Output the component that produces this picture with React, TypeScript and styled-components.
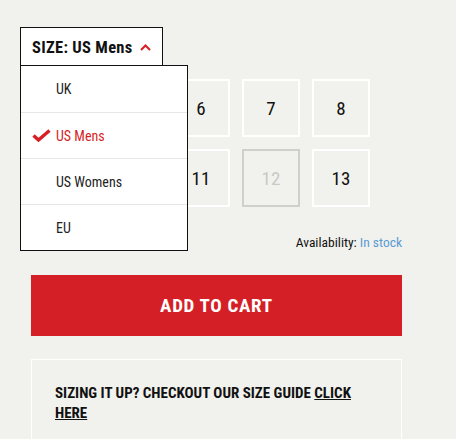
import React from "react";
import styled, { createGlobalStyle } from "styled-components";

const FONT = `"Roboto Condensed", "Liberation Sans", sans-serif`;

const GlobalStyle = createGlobalStyle`
  html, body {
    margin: 0;
    padding: 0;
    background: #f1f1ed;
  }
  body {
    font-family: ${FONT};
    color: #111;
  }
`;

const Page = styled.div`
  position: relative;
  width: 456px;
  height: 439px;
  overflow: hidden;
  padding: 27px 0 0 20px;
  box-sizing: border-box;
`;

const Selector = styled.div`
  position: relative;
  width: 142px;
`;

const Trigger = styled.button`
  display: flex;
  align-items: center;
  gap: 7px;
  width: 143px;
  height: 39px;
  padding: 0 0 0 11px;
  margin: 0;
  box-sizing: border-box;
  border: 1px solid #111;
  border-bottom: none;
  background: #fff;
  font-family: ${FONT};
  font-weight: 700;
  font-size: 16.5px;
  letter-spacing: 0.3px;
  white-space: nowrap;
  color: #111;
  cursor: pointer;
`;

const Menu = styled.ul`
  position: absolute;
  top: 38px;
  left: 0;
  z-index: 2;
  width: 168px;
  margin: 0;
  padding: 0;
  list-style: none;
  box-sizing: border-box;
  border: 1px solid #111;
  background: #fff;
`;

const MenuItem = styled.li<{ $active?: boolean }>`
  display: flex;
  align-items: center;
  height: 46px;
  padding-left: 11px;
  gap: 5px;
  box-sizing: border-box;
  font-size: 14px;
  color: ${(p) => (p.$active ? "#d71f27" : "#222")};
  & + & {
    border-top: 1px solid #e6e6e6;
  }
`;

const CheckSlot = styled.span`
  display: inline-flex;
  width: 19px;
  height: 14px;
  align-items: center;
`;

const Grid = styled.div`
  display: grid;
  grid-template-columns: repeat(5, 58px);
  gap: 12px;
  margin: 13px 0 0 12px;
`;

const SizeBox = styled.button<{ $disabled?: boolean }>`
  width: 58px;
  height: 58px;
  box-sizing: border-box;
  border: 2px solid ${(p) => (p.$disabled ? "#cfcfcc" : "#fff")};
  background: transparent;
  font-family: ${FONT};
  font-size: 19px;
  color: ${(p) => (p.$disabled ? "#c9c9c6" : "#111")};
  padding: 0;
  display: flex;
  align-items: center;
  justify-content: center;
`;

const Availability = styled.div`
  width: 382px;
  margin-top: 27px;
  text-align: right;
  font-size: 13.5px;
  color: #111;
  span {
    color: #5a9bd3;
  }
`;

const Column = styled.div`
  width: 371px;
  margin-left: 11px;
`;

const CartButton = styled.button`
  display: block;
  width: 371px;
  height: 61px;
  margin-top: 25px;
  border: none;
  background: #d51f26;
  color: #fff;
  font-family: ${FONT};
  font-weight: 700;
  font-size: 19px;
  letter-spacing: 0.7px;
`;

const GuideBox = styled.div`
  margin-top: 23px;
  border: 1px solid #fff;
  padding: 23px 23px 40px;
  font-weight: 700;
  font-size: 15px;
  line-height: 20px;
  text-transform: uppercase;
  color: #111;
  a {
    color: #111;
    text-decoration: underline;
  }
`;

const Chevron = () => (
  <svg width="11" height="7" viewBox="0 0 11 7">
    <path d="M1 6 L5.5 1.5 L10 6" fill="none" stroke="#d71f27" strokeWidth="2" />
  </svg>
);

const Check = () => (
  <svg width="19" height="13" viewBox="0 0 19 13">
    <path d="M1.5 6.5 L6.5 11 L17.5 1.5" fill="none" stroke="#d71f27" strokeWidth="3.4" />
  </svg>
);

const systems = ["UK", "US Mens", "US Womens", "EU"];
const sizes = [4, 5, 6, 7, 8, 9, 10, 11, 12, 13];

export default function App() {
  return (
    <>
      <GlobalStyle />
      <Page>
        <Selector>
          <Trigger>
            SIZE: US Mens <Chevron />
          </Trigger>
          <Menu>
            {systems.map((s) => (
              <MenuItem key={s} $active={s === "US Mens"}>
                <CheckSlot>{s === "US Mens" && <Check />}</CheckSlot>
                {s}
              </MenuItem>
            ))}
          </Menu>
        </Selector>
        <Grid>
          {sizes.map((n) => (
            <SizeBox key={n} $disabled={n === 12}>
              {n}
            </SizeBox>
          ))}
        </Grid>
        <Availability>
          Availability: <span>In stock</span>
        </Availability>
        <Column>
          <CartButton>ADD TO CART</CartButton>
          <GuideBox>
            Sizing it up? Checkout our size guide <a href="#">Click here</a>
          </GuideBox>
        </Column>
      </Page>
    </>
  );
}
